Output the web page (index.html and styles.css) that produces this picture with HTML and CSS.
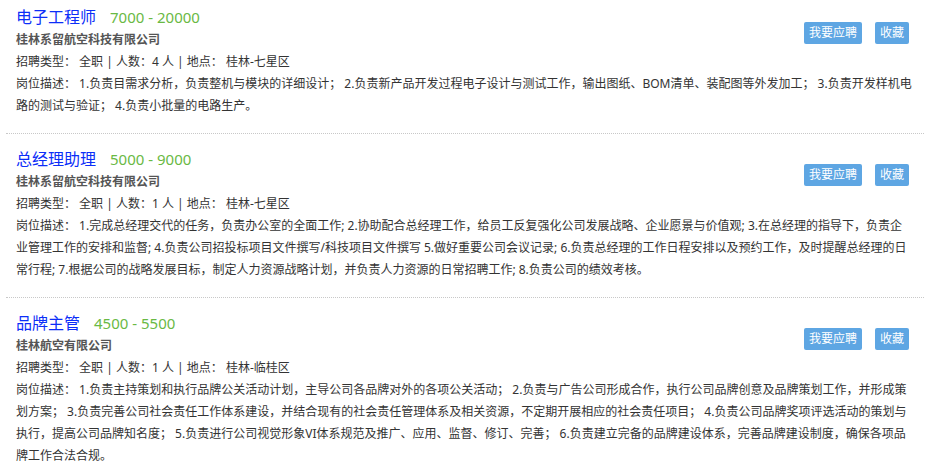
FILE: index.html
```html
<!doctype html>
<html lang="zh-CN">
<head>
    <meta charset="UTF-8">
    <meta name="viewport" content="width=device-width, initial-scale=1.0">
    <title>招聘职位</title>
    <link rel="stylesheet" href="styles.css">
</head>
<body>
    <!-- Job List -->
    <div class="job-list">
        <div class="job-item">
            <div class="job-actions">
                <a href="#" class="btn">我要应聘</a>
                <a href="#" class="btn">收藏</a>
            </div>
            <h3 class="job-title">电子工程师<span class="salary">7000 - 20000</span></h3>
            <div class="company">桂林系留航空科技有限公司</div>
            <div class="job-meta">招聘类型： 全职 | 人数：4 人 | 地点： 桂林-七星区</div>
            <div class="job-desc">岗位描述： 1.负责目需求分析，负责整机与模块的详细设计； 2.负责新产品开发过程电子设计与测试工作，输出图纸、BOM清单、装配图等外发加工； 3.负责开发样机电路的测试与验证； 4.负责小批量的电路生产。</div>
        </div>

        <div class="job-item">
            <div class="job-actions">
                <a href="#" class="btn">我要应聘</a>
                <a href="#" class="btn">收藏</a>
            </div>
            <h3 class="job-title">总经理助理<span class="salary">5000 - 9000</span></h3>
            <div class="company">桂林系留航空科技有限公司</div>
            <div class="job-meta">招聘类型： 全职 | 人数：1 人 | 地点： 桂林-七星区</div>
            <div class="job-desc">岗位描述： 1.完成总经理交代的任务，负责办公室的全面工作; 2.协助配合总经理工作，给员工反复强化公司发展战略、企业愿景与价值观; 3.在总经理的指导下，负责企业管理工作的安排和监督; 4.负责公司招投标项目文件撰写/科技项目文件撰写 5.做好重要公司会议记录; 6.负责总经理的工作日程安排以及预约工作，及时提醒总经理的日常行程; 7.根据公司的战略发展目标，制定人力资源战略计划，并负责人力资源的日常招聘工作; 8.负责公司的绩效考核。</div>
        </div>

        <div class="job-item">
            <div class="job-actions">
                <a href="#" class="btn">我要应聘</a>
                <a href="#" class="btn">收藏</a>
            </div>
            <h3 class="job-title">品牌主管<span class="salary">4500 - 5500</span></h3>
            <div class="company">桂林航空有限公司</div>
            <div class="job-meta">招聘类型： 全职 | 人数：1 人 | 地点： 桂林-临桂区</div>
            <div class="job-desc">岗位描述： 1.负责主持策划和执行品牌公关活动计划，主导公司各品牌对外的各项公关活动； 2.负责与广告公司形成合作，执行公司品牌创意及品牌策划工作，并形成策划方案； 3.负责完善公司社会责任工作体系建设，并结合现有的社会责任管理体系及相关资源，不定期开展相应的社会责任项目； 4.负责公司品牌奖项评选活动的策划与执行，提高公司品牌知名度； 5.负责进行公司视觉形象VI体系规范及推广、应用、监督、修订、完善； 6.负责建立完备的品牌建设体系，完善品牌建设制度，确保各项品牌工作合法合规。</div>
        </div>
    </div>
</body>
</html>
```

FILE: styles.css
```css
/* General Styles */
body {
    margin: 0;
    font-family: "Noto Sans", "Noto Sans CJK SC", sans-serif;
    font-size: 12px;
    color: #333;
    background-color: #fff;
    overflow: hidden;
}

/* Job List */
.job-list {
    margin: -8px 11px 0 6px;
}

.job-item {
    padding: 13px 10px 16px 10px;
    border-bottom: 1px dotted #c8c8c8;
}

.job-title {
    margin: 0;
    font-size: 16px;
    font-weight: normal;
    line-height: 24px;
    color: #0c2ef8;
}

.salary {
    margin-left: 14px;
    font-size: 15px;
    color: #69b944;
}

.company {
    line-height: 22px;
    font-weight: bold;
    color: #555;
}

.job-meta,
.job-desc {
    line-height: 22px;
    color: #333;
}

/* Buttons */
.job-actions {
    float: right;
    display: flex;
    gap: 13px;
    margin: 17px 5px 0 0;
}

.btn {
    display: block;
    height: 22px;
    line-height: 22px;
    padding: 0 5px;
    border-radius: 2px;
    background-color: #5ea6e3;
    color: #fff;
    text-decoration: none;
    font-size: 12px;
}
```
